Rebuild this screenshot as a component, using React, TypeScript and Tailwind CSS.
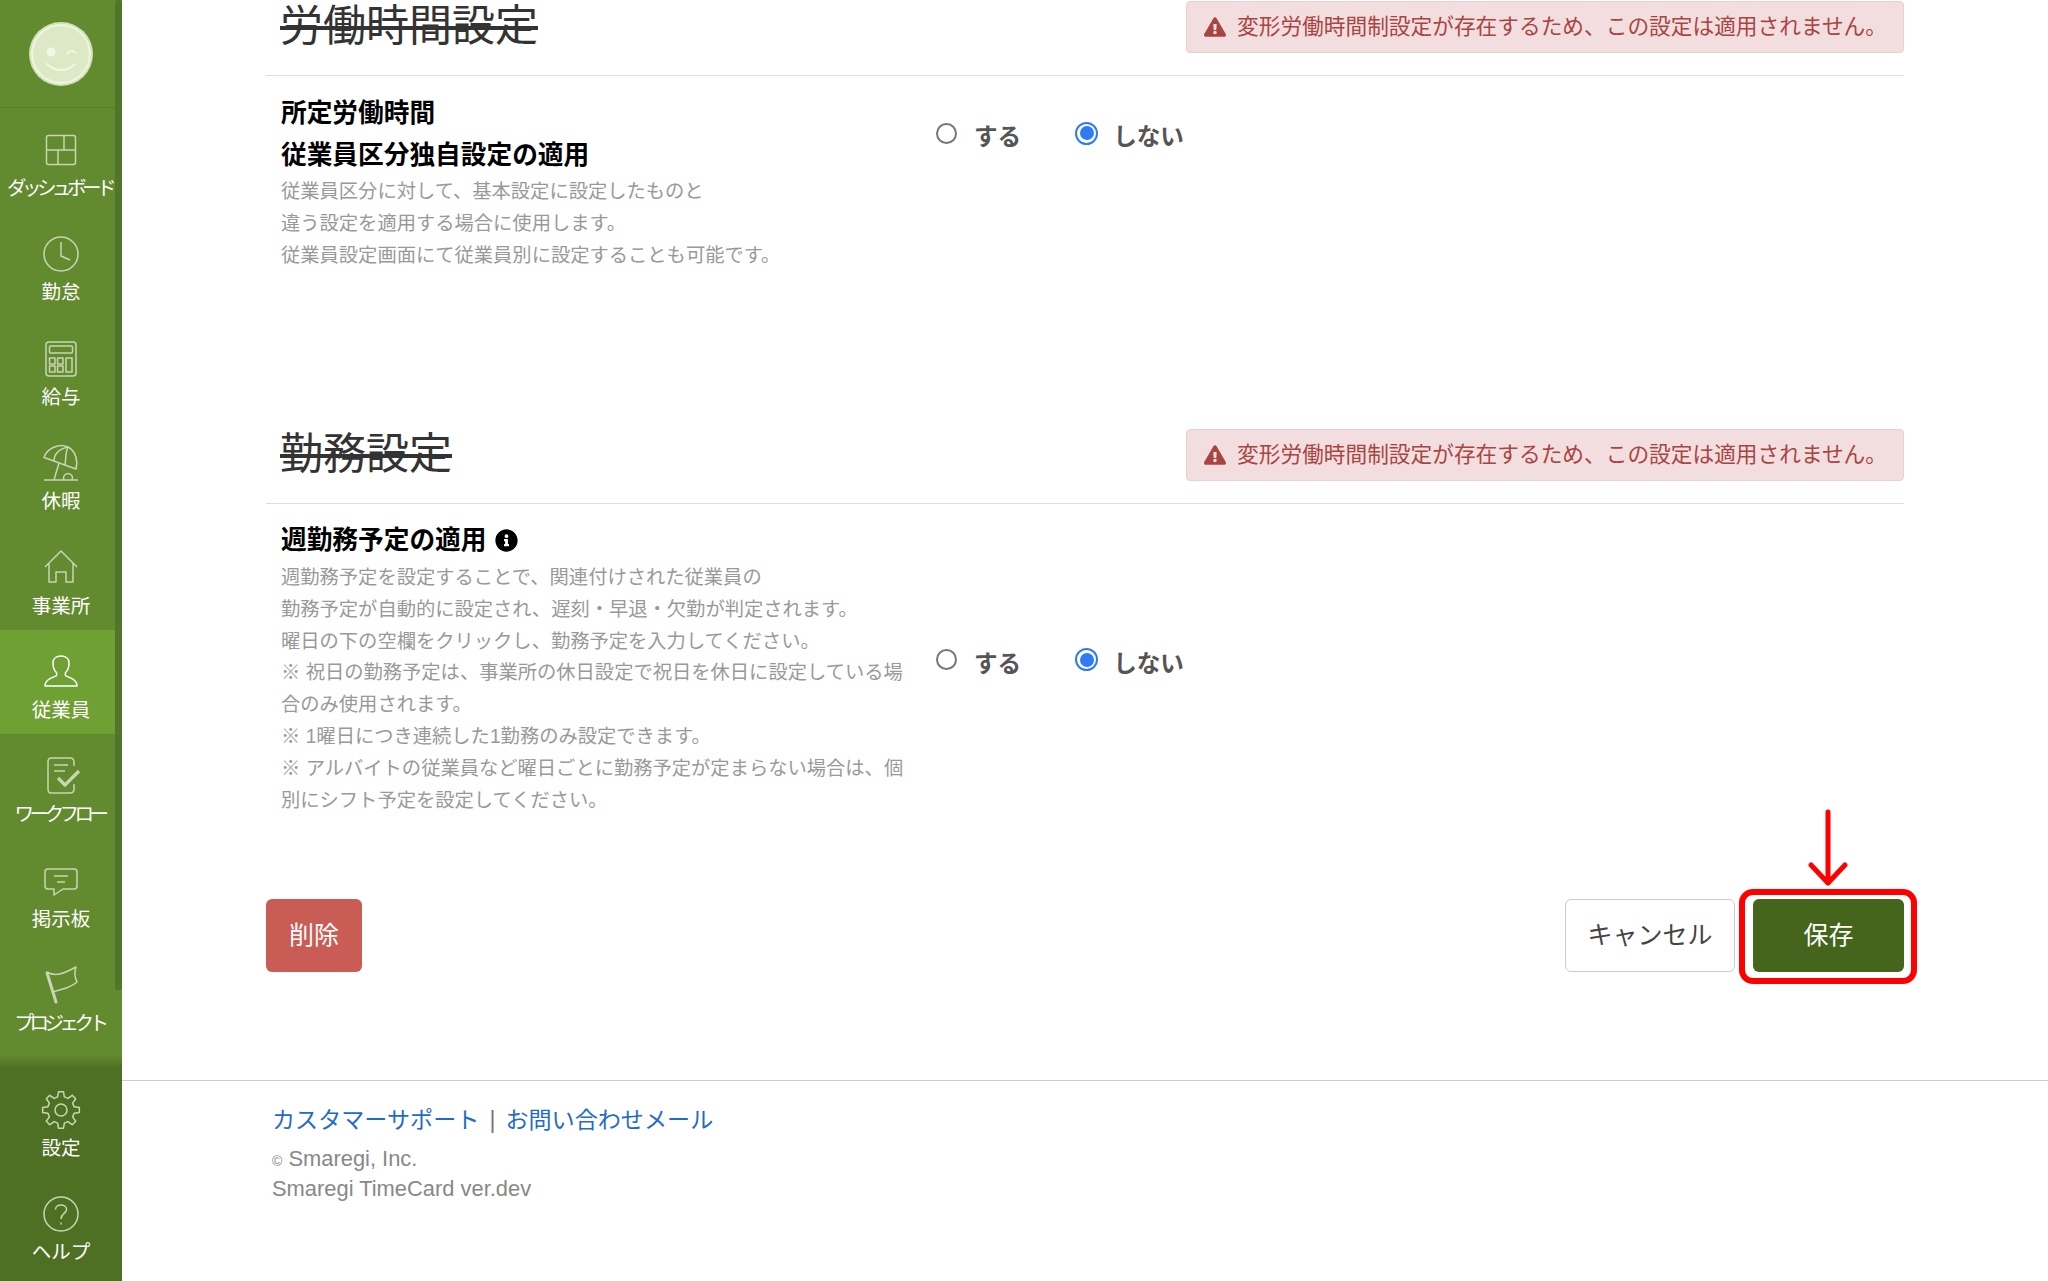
import type { ReactNode } from 'react';
import { FaExclamationTriangle, FaInfoCircle } from 'react-icons/fa';

const gearPath = () => {
  const teeth = 8;
  const points: string[] = [];
  for (let i = 0; i < teeth; i++) {
    const a = (i * Math.PI * 2) / teeth - Math.PI / 2;
    const step = (Math.PI * 2) / teeth;
    const p = (r: number, t: number) =>
      `${(20 + r * Math.cos(a + t * step)).toFixed(2)} ${(20 + r * Math.sin(a + t * step)).toFixed(2)}`;
    points.push(`${i === 0 ? 'M' : 'L'}${p(18.5, -0.17)}`);
    points.push(`L${p(18.5, 0.17)}`);
    points.push(`L${p(13.5, 0.32)}`);
    points.push(`L${p(13.5, 0.68)}`);
  }
  return points.join(' ') + 'Z';
};

const icons: Record<string, ReactNode> = {
  dashboard: (
    <>
      <rect x="5.5" y="5.5" width="29" height="29" rx="2" />
      <path d="M23 5.5V20M5.5 20H34.5M17 20V34.5" />
    </>
  ),
  clock: (
    <>
      <circle cx="20" cy="20" r="17" />
      <path d="M20 8V22L29 26" />
    </>
  ),
  calc: (
    <>
      <rect x="5" y="3" width="30" height="34" rx="3" />
      <rect x="8.5" y="7" width="23" height="7" rx="1" />
      <rect x="8.5" y="19" width="5.5" height="6" />
      <rect x="16.5" y="19" width="5.5" height="6" />
      <rect x="8.5" y="27" width="5.5" height="6" />
      <rect x="16.5" y="27" width="5.5" height="6" />
      <rect x="25" y="19" width="6" height="14" />
    </>
  ),
  umbrella: (
    <>
      <path d="M3 14.5C6 5 18 0 27 4C35 8 37 18 35 26Z" />
      <path d="M13 18.5C13 11 18 6 27 4C24 10 25 17 24 22" />
      <path d="M18 20L13 37M3 37H37" />
      <path d="M23 37A4.5 4.5 0 1 1 31 37" />
    </>
  ),
  house: <path d="M4 19L20 3L36 19M8 15V34H15V24H25V34H32V15" />,
  person: (
    <path d="M4 34C4 28 10 26 15 24C16 23 16 21 15 20C13 18 12 14 12 11C12 6 16 4 20 4C24 4 28 6 28 11C28 14 27 18 25 20C24 21 24 23 25 24C30 26 36 28 36 34Z" />
  ),
  flow: (
    <>
      <path d="M33 10V6C33 3.5 31.5 2 29 2H10C8 2 7 3.5 7 6V33C7 35.5 8.5 37 10 37H29C31.5 37 33 35.5 33 33V28" />
      <path d="M13 9H27M13 15H24" />
      <path d="M17 22L24 29L38 15" strokeWidth="3.2" />
    </>
  ),
  chat: (
    <>
      <path d="M7 8H33Q36 8 36 11V25Q36 28 33 28H22L13 34V28H7Q4 28 4 25V11Q4 8 7 8Z" />
      <path d="M13 15H27M16 21H24" />
    </>
  ),
  flag: (
    <>
      <path d="M6 8L15 37" strokeWidth="3" strokeLinecap="round" />
      <path d="M6 7C14 12 22 9 35 2C33 8 34 13 36 17C28 24 20 24 12 27" />
    </>
  ),
  gear: (
    <>
      <path d={gearPath()} />
      <circle cx="20" cy="20" r="6" />
    </>
  ),
  help: (
    <>
      <circle cx="20" cy="20" r="17" />
      <path d="M14.5 15.5C14.5 9.5 25.5 9.5 25.5 15.5C25.5 19.5 20 19.5 20 25" />
      <path d="M20 28.5V30.5" />
    </>
  ),
};

const navItems = [
  { icon: 'dashboard', label: 'ダッシュボード', tight: true },
  { icon: 'clock', label: '勤怠' },
  { icon: 'calc', label: '給与' },
  { icon: 'umbrella', label: '休暇' },
  { icon: 'house', label: '事業所' },
  { icon: 'person', label: '従業員', active: true },
  { icon: 'flow', label: 'ワークフロー', tight: true },
  { icon: 'chat', label: '掲示板' },
  { icon: 'flag', label: 'プロジェクト', tight: true },
];

const NavItem = ({ icon, label, active, tight }: { icon: string; label: string; active?: boolean; tight?: boolean }) => (
  <div className={`flex h-[104.4px] flex-col items-center pt-[22px] ${active ? 'bg-[#6fa034]' : ''}`}>
    <svg
      width="40"
      height="40"
      viewBox="0 0 40 40"
      fill="none"
      strokeWidth="1.5"
      strokeLinejoin="round"
      className={active ? 'stroke-white' : 'stroke-[#c9d6b4]'}
    >
      {icons[icon]}
    </svg>
    <span
      className={`mt-[6px] whitespace-nowrap text-[19.5px] leading-[24px] text-white ${tight ? '-ml-[3px] tracking-[-4.5px]' : ''}`}
    >
      {label}
    </span>
  </div>
);

const Alert = () => (
  <div className="flex h-[52px] w-[718px] items-center rounded-[4px] border border-[#ebd0d3] bg-[#f2dede] pl-[17px] text-[21.7px] text-[#a94442]">
    <FaExclamationTriangle className="mr-[11px] h-[22px] w-[22px] shrink-0" />
    <span className="whitespace-nowrap">変形労働時間制設定が存在するため、この設定は適用されません。</span>
  </div>
);

const SectionHead = ({ title }: { title: string }) => (
  <div className="flex h-[75px] items-start justify-between border-b border-[#dddddd] pl-[14px]">
    <h2 className="-mt-[5px] whitespace-nowrap text-[43px] font-normal leading-[60px] text-[#333333] line-through">{title}</h2>
    <Alert />
  </div>
);

const RadioGroup = () => (
  <div className="ml-[16px] flex h-[32px] items-center text-[23.6px] font-bold text-[#555555]">
    <span className="-mt-[6px] h-[21px] w-[21px] rounded-full border-2 border-[#767676] bg-white" />
    <span className="mt-[3px] ml-[17px]">する</span>
    <span className="-mt-[6px] ml-[54px] flex h-[23px] w-[23px] items-center justify-center rounded-full border-2 border-[#2f7bf5] bg-white">
      <span className="h-[14px] w-[14px] rounded-full bg-[#2f7bf5]" />
    </span>
    <span className="mt-[3px] ml-[15px]">しない</span>
  </div>
);

const App = () => {
  return (
    <div className="flex h-[1281px] w-full overflow-hidden bg-white font-['Liberation_Sans','Noto_Sans_CJK_JP',sans-serif]">
      <aside className="flex w-[122px] shrink-0 flex-col bg-[#628a2e]">
        <div className="relative flex-1">
          <div className="flex h-[108px] items-center justify-center border-b border-[#5a7f2a]">
            <svg width="66" height="66" viewBox="0 0 66 66" fill="none">
              <circle cx="33" cy="33" r="32" fill="#d3e2b8" />
              <circle cx="33" cy="33" r="29" fill="#dde9c6" stroke="#eff5e3" strokeWidth="2" />
              <circle cx="23" cy="31" r="4.5" fill="#f2f7e8" />
              <path d="M39 33C41 29.5 45 29 47 31.5M19 43C27 51 39 51 47 43" stroke="#f2f7e8" strokeWidth="1.8" strokeLinecap="round" />
            </svg>
          </div>
          {navItems.map((item) => (
            <NavItem key={item.label} {...item} />
          ))}
          <div className="absolute top-0 right-0 h-[990px] w-[7px] rounded-[3px] bg-[#53752a]" />
          <div className="absolute right-0 bottom-0 left-0 h-[13px] bg-gradient-to-b from-transparent to-[#4e7022]" />
        </div>
        <div className="h-[213px] bg-[#4e7022]">
          <NavItem icon="gear" label="設定" />
          <NavItem icon="help" label="ヘルプ" />
        </div>
      </aside>

      <main className="flex min-w-0 flex-1 flex-col">
        <div className="px-[144px] pt-px">
          <SectionHead title="労働時間設定" />
          <div className="flex h-[180px] items-start pt-[16px] pl-[15px]">
            <div className="w-[639px]">
              <div className="text-[25.7px] leading-[42px] font-bold text-black">
                所定労働時間
                <br />
                従業員区分独自設定の適用
              </div>
              <p className="text-[19.3px] leading-[32px] text-[#999999]">
                従業員区分に対して、基本設定に設定したものと
                <br />
                違う設定を適用する場合に使用します。
                <br />
                従業員設定画面にて従業員別に設定することも可能です。
              </p>
            </div>
            <div className="mt-[28px]">
              <RadioGroup />
            </div>
          </div>

          <div className="mt-[173px]">
            <SectionHead title="勤務設定" />
          </div>
          <div className="flex items-center pt-[16px] pl-[15px]">
            <div className="w-[639px]">
              <div className="flex h-[42px] items-center pb-[2px] text-[25.7px] font-bold text-black">
                週勤務予定の適用
                <FaInfoCircle className="ml-[8px] h-[23px] w-[23px]" />
              </div>
              <p className="text-[19.3px] leading-[31.8px] whitespace-nowrap text-[#999999]">
                週勤務予定を設定することで、関連付けされた従業員の
                <br />
                勤務予定が自動的に設定され、遅刻・早退・欠勤が判定されます。
                <br />
                曜日の下の空欄をクリックし、勤務予定を入力してください。
                <br />※ 祝日の勤務予定は、事業所の休日設定で祝日を休日に設定している場
                <br />
                合のみ使用されます。
                <br />※ 1曜日につき連続した1勤務のみ設定できます。
                <br />※ アルバイトの従業員など曜日ごとに勤務予定が定まらない場合は、個
                <br />
                別にシフト予定を設定してください。
              </p>
            </div>
            <div className="pb-[11px]">
              <RadioGroup />
            </div>
          </div>

          <div className="relative mt-[83px] flex items-center justify-between">
            <button className="h-[73px] w-[96px] rounded-[6px] bg-[#c95c54] text-[25px] text-white">削除</button>
            <div className="flex gap-[18px]">
              <button className="h-[73px] w-[170px] rounded-[6px] border border-[#cccccc] bg-white text-[25px] text-[#444444]">
                キャンセル
              </button>
              <button className="h-[73px] w-[151px] rounded-[6px] bg-[#44651b] text-[25px] text-white">保存</button>
            </div>
            <div className="absolute -top-[10px] -right-[13px] h-[95px] w-[178px] rounded-[14px] border-[6px] border-[#ff0000]" />
            <svg className="absolute -top-[90px] right-[56px]" width="40" height="78" viewBox="0 0 40 78" fill="none">
              <path d="M20 3V74M3 56L20 74L37 56" stroke="#ff0000" strokeWidth="5" strokeLinecap="round" strokeLinejoin="round" />
            </svg>
          </div>
        </div>

        <footer className="mt-[108px] border-t border-[#cccccc] pt-[23px] pl-[150px]">
          <div className="flex h-[32px] items-center text-[23.1px] text-[#1f6bc9]">
            <span>カスタマーサポート</span>
            <span className="mx-[10px] text-[#777777]">|</span>
            <span>お問い合わせメール</span>
          </div>
          <div className="mt-[9px] text-[21.9px] leading-[28px] text-[#888888]">
            <span className="text-[14px]">©</span> Smaregi, Inc.
            <br />
            Smaregi TimeCard ver.dev
          </div>
        </footer>
      </main>
    </div>
  );
};

export default App;
